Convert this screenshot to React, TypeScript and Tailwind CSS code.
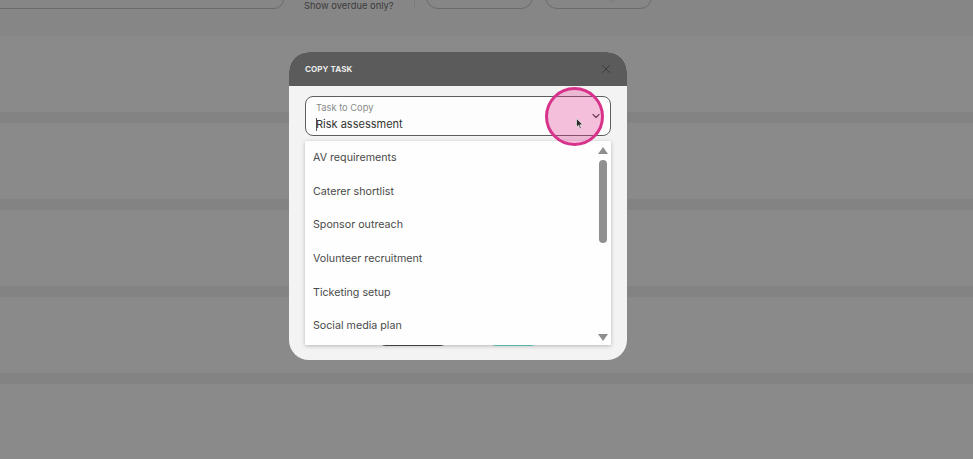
import { ChevronDown, X } from "lucide-react";

const tasks = [
  "AV requirements",
  "Caterer shortlist",
  "Sponsor outreach",
  "Volunteer recruitment",
  "Ticketing setup",
  "Social media plan",
];

const Row = () => (
  <>
    <div className="h-[11px] bg-[#838383]" />
    <div className="h-[76px] bg-[#8a8a8a]" />
  </>
);

export default function App() {
  return (
    <div
      className="relative w-[973px] h-[459px] overflow-hidden bg-[#8a8a8a]"
      style={{ fontFamily: "Inter, 'Noto Sans', sans-serif" }}
    >
      {/* page behind the overlay */}
      <div className="flex flex-col">
        <div className="h-[36px] bg-[#868686] overflow-hidden">
          <div className="flex items-end h-[40px] -mt-[31px]">
            <div className="-ml-[16px] w-[300px] h-full rounded-[10px] border border-[#6b6b6b]" />
            <span className="ml-[20px] w-[90px] -mb-[2px] text-[9.4px] leading-[11px] whitespace-nowrap text-[#3b3b3b]">
              Show overdue only?
            </span>
            <div className="ml-[20px] w-px h-full bg-[#7c7c7c]" />
            <div className="ml-[11px] w-[107px] h-full rounded-[12px] border border-[#6b6b6b]" />
            <div className="ml-[12px] w-[107px] h-full rounded-[12px] border border-[#6b6b6b] flex items-end justify-center pb-[7px]">
              <span className="text-[9.5px] leading-none text-[#7a7a7a]">Sorting</span>
            </div>
          </div>
        </div>
        <div className="h-[76px] bg-[#8a8a8a]" />
        <Row />
        <Row />
        <Row />
        <Row />
      </div>

      {/* modal */}
      <div className="absolute left-[289px] top-[52px] w-[338px] h-[308px] rounded-[20px] overflow-hidden flex flex-col bg-[#f3f3f3]">
        <div className="h-[34px] bg-[#5b5b5b] flex items-center justify-between pl-[16px] pr-[14px]">
          <span className="text-[8px] font-bold tracking-[0.1px] text-[#ececec]">COPY TASK</span>
          <X size={14} strokeWidth={1.6} className="text-[#393939]" />
        </div>
        <div className="flex-1 flex flex-col px-[16px] pt-[10px] pb-[14px]">
          <div className="relative h-[40px] rounded-[8px] border border-[#5e5e5e] bg-[#fdfdfd] pl-[10px] pt-[5px]">
            <div className="text-[9.3px] leading-[12px] text-[#8a8a8a]">Task to Copy</div>
            <div className="mt-[2px] flex items-center text-[11px] leading-[16px] text-[#333]">
              <span className="w-px h-[13px] bg-[#555] -mr-[1px]" />
              Risk assessment
            </div>
            <ChevronDown
              size={12}
              strokeWidth={2.4}
              className="absolute right-[8px] top-[13px] text-[#444]"
            />
          </div>
          <div className="mt-auto flex justify-center gap-[40px]">
            <div className="w-[70px] h-[30px] rounded-[8px] bg-[#4b4b4b]" />
            <div className="w-[51px] h-[30px] rounded-[8px] border border-[#66d5cb] bg-[#f3f3f3]" />
          </div>
        </div>
      </div>

      {/* open listbox */}
      <div className="absolute left-[305px] top-[141px] w-[306px] h-[204px] bg-[#fefefe] shadow-[0_1px_4px_rgba(0,0,0,0.25)] flex">
        <ul className="flex-1 pl-[8px]">
          {tasks.map((t) => (
            <li key={t} className="h-[33.7px] flex items-center text-[10.7px] text-[#4a4a4a]">
              {t}
            </li>
          ))}
        </ul>
        <div className="w-[14px] flex flex-col items-center pt-[6px] pb-[4px] mr-[1px]">
          <svg width="10" height="7" viewBox="0 0 10 7">
            <path d="M5 0 L10 7 L0 7 Z" fill="#8e8e8e" />
          </svg>
          <div className="mt-[6px] w-[8px] h-[83px] rounded-full bg-[#8f8f8f]" />
          <div className="flex-1" />
          <svg width="10" height="7" viewBox="0 0 10 7">
            <path d="M0 0 L10 0 L5 7 Z" fill="#8e8e8e" />
          </svg>
        </div>
      </div>

      {/* click highlight */}
      <div className="absolute left-[545px] top-[87px] w-[59px] h-[59px] rounded-full border-[3px] border-[#d8338b] bg-[#e0338a]/30" />
      <svg
        className="absolute left-[576px] top-[118px]"
        width="8"
        height="12"
        viewBox="0 0 8 12"
      >
        <path d="M0.5 0.5 L0.5 9 L2.6 7.2 L4 10.8 L5.3 10.2 L3.9 6.8 L6.7 6.8 Z" fill="#2b2b2b" stroke="#f7f7f7" strokeWidth="0.6" />
      </svg>
    </div>
  );
}
